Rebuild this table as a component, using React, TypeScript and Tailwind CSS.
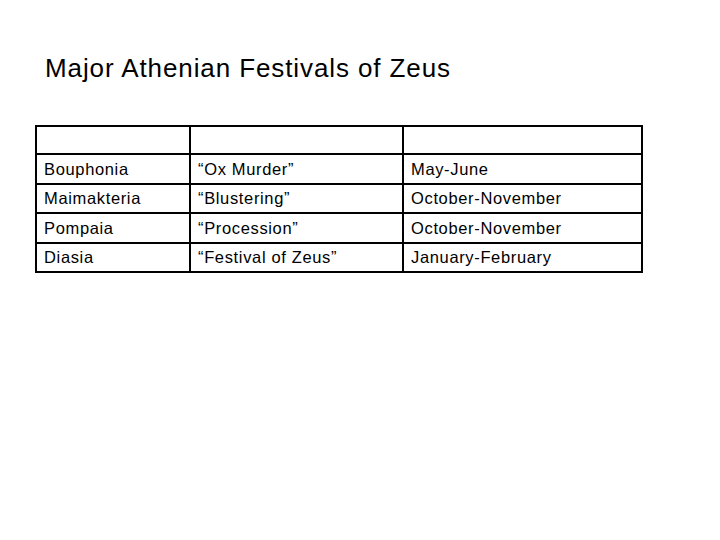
import React from "react";

const rows: [string, string, string][] = [
  ["Bouphonia", "\u201cOx Murder\u201d", "May-June"],
  ["Maimakteria", "\u201cBlustering\u201d", "October-November"],
  ["Pompaia", "\u201cProcession\u201d", "October-November"],
  ["Diasia", "\u201cFestival of Zeus\u201d", "January-February"],
];

const rowHeights = ["h-[30px]", "h-[29px]", "h-[30px]", "h-[29px]"];

export default function App() {
  return (
    <div
      className="w-[720px] h-[540px] bg-white text-black overflow-hidden"
      style={{ fontFamily: '"Liberation Sans", Arial, sans-serif' }}
    >
      <div className="pt-[55px] pl-[45px]">
        <h1 className="text-[26px] leading-none tracking-[0.9px] font-normal">
          Major Athenian Festivals of Zeus
        </h1>
      </div>
      <div className="mt-[44px] ml-[35px] w-[608px] border-l-2 border-t-2 border-black grid grid-cols-[154px_213px_239px]">
        <div className="h-[28px] border-r-2 border-b-2 border-black" />
        <div className="h-[28px] border-r-2 border-b-2 border-black" />
        <div className="h-[28px] border-r-2 border-b-2 border-black" />
        {rows.map((r, i) =>
          r.map((c, j) => (
            <div
              key={`${i}-${j}`}
              className={`${rowHeights[i]} border-r-2 border-b-2 border-black flex items-center pl-[7px] text-[16.5px] leading-none tracking-[0.65px] whitespace-nowrap`}
            >
              {c}
            </div>
          ))
        )}
      </div>
    </div>
  );
}
